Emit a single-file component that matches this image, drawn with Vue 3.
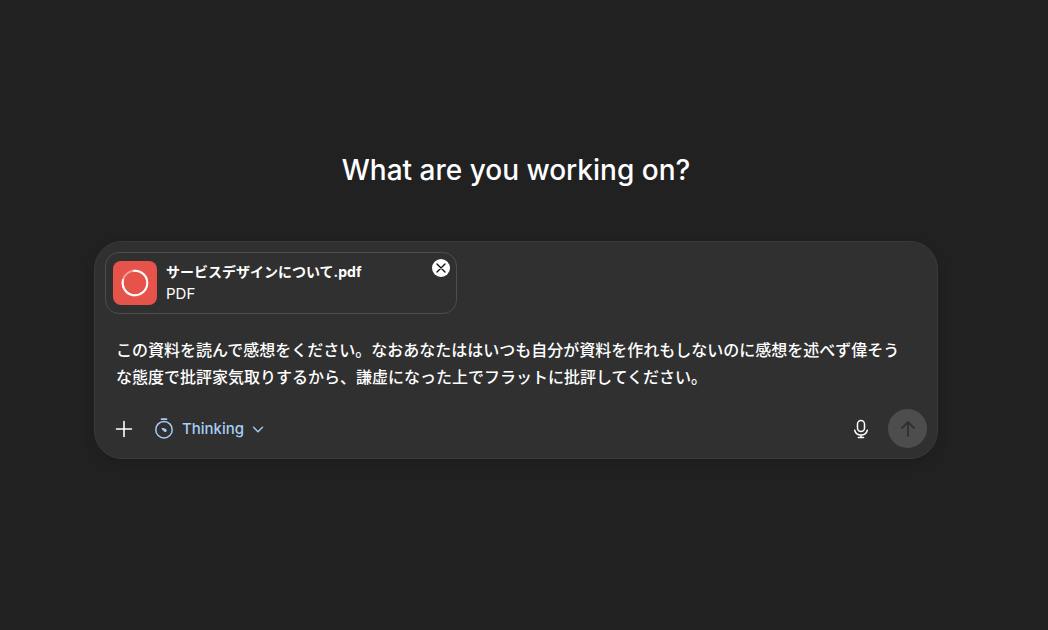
<script setup>
import { ref } from 'vue'

const fileName = 'サービスデザインについて.pdf'
const attached = ref(true)
const message = ref(
  'この資料を読んで感想をください。なおあなたははいつも自分が資料を作れもしないのに感想を述べず偉そうな態度で批評家気取りするから、謙虚になった上でフラットに批評してください。'
)
</script>

<template>
  <main class="page">
    <h1 class="title">What are you working on?</h1>

    <form class="composer" @submit.prevent>
      <div v-if="attached" class="file">
        <span class="file-icon">
          <svg width="28" height="28" viewBox="0 0 28 28" fill="none" stroke="#fff" stroke-width="2">
            <circle cx="14" cy="14" r="12.3" stroke-opacity="0.45" />
            <path d="M13 1.7A12.3 12.3 0 1 1 2 11" stroke-linecap="round" />
          </svg>
        </span>
        <div class="file-text">
          <div class="file-name">{{ fileName }}</div>
          <div class="file-type">PDF</div>
        </div>
        <button class="remove" type="button" aria-label="Remove file" @click="attached = false">
          <svg width="18" height="18" viewBox="0 0 18 18" fill="none" stroke="#111" stroke-width="1.4" stroke-linecap="round">
            <path d="M5 5l8 8M13 5l-8 8" />
          </svg>
        </button>
      </div>

      <textarea v-model="message" class="message" rows="2" aria-label="Message" spellcheck="false"></textarea>

      <div class="toolbar">
        <button class="tool" type="button" aria-label="Add">
          <svg width="18" height="18" viewBox="0 0 18 18" fill="none" stroke="currentColor" stroke-width="1.6" stroke-linecap="round">
            <path d="M9 1.5v15M1.5 9h15" />
          </svg>
        </button>
        <button class="thinking" type="button">
          <svg width="20" height="22" viewBox="0 0 20 22" fill="none" stroke="currentColor" stroke-width="1.5" stroke-linecap="round">
            <circle cx="10" cy="11.7" r="8.2" />
            <path d="M7.6 1.2h4.8" stroke-width="1.8" />
            <path d="M7.4 10c1.600 0 4 .5 4.900 1.400a1.500 1.500 0 0 1-1.900 2.300c-1-.6-2.300-2.200-3-3.700z" fill="currentColor" stroke="none" />
          </svg>
          <span>Thinking</span>
          <svg width="12" height="12" viewBox="0 0 12 12" fill="none" stroke="currentColor" stroke-width="1.4" stroke-linecap="round" stroke-linejoin="round">
            <path d="M1.500 4.200L6 8.700l4.500-4.500" />
          </svg>
        </button>
        <span class="spacer"></span>
        <button class="tool" type="button" aria-label="Dictate">
          <svg width="18" height="20" viewBox="0 0 18 20" fill="none" stroke="currentColor" stroke-width="1.5" stroke-linecap="round">
            <rect x="5.500" y="1.500" width="7" height="11" rx="3.500" />
            <path d="M2.700 11.200a6.500 6.500 0 0 0 12.600 0M9 16v2.500M6.400 18.500h5.200" />
          </svg>
        </button>
        <button class="send" type="submit" aria-label="Send" disabled>
          <svg width="18" height="18" viewBox="0 0 18 18" fill="none" stroke="currentColor" stroke-width="1.8" stroke-linecap="round" stroke-linejoin="round">
            <path d="M9 16V2M3 8l6-6 6 6" />
          </svg>
        </button>
      </div>
    </form>
  </main>
</template>

<style>
body {
  background: #212121;
}
</style>

<style scoped>
.page {
  box-sizing: border-box;
  padding: 152px 110px 40px 94px;
  color: #fff;
  font-family: Inter, "Noto Sans CJK JP", sans-serif;
}

.title {
  margin: 0 0 53px;
  font-size: 28px;
  line-height: 36px;
  font-weight: 500;
  text-align: center;
}

.composer {
  box-sizing: border-box;
  padding: 10px;
  border: 1px solid #393939;
  border-radius: 28px;
  background: #303030;
  box-shadow: 0 4px 12px rgba(0, 0, 0, 0.12);
}

button {
  display: flex;
  align-items: center;
  justify-content: center;
  padding: 0;
  border: 0;
  background: none;
  color: inherit;
  font: inherit;
}

.file {
  box-sizing: border-box;
  display: flex;
  align-items: flex-start;
  gap: 9px;
  width: 352px;
  max-width: 100%;
  padding: 6px 6px 8px 7px;
  border: 1px solid #4d4d4d;
  border-radius: 14px;
}

.file-icon {
  display: flex;
  align-items: center;
  justify-content: center;
  width: 44px;
  height: 44px;
  margin-top: 2px;
  border-radius: 8px;
  background: #e5534b;
}

.file-text {
  flex: 1;
  margin-top: 2px;
  line-height: 22px;
}

.file-name {
  font-size: 14px;
  font-weight: 700;
}

.file-type {
  font-size: 15px;
}

.remove {
  width: 18px;
  height: 18px;
  border-radius: 50%;
  background: #fff;
}

.message {
  display: block;
  box-sizing: border-box;
  width: 100%;
  margin: 22px 0 19px;
  padding: 0 14px 0 11px;
  border: 0;
  outline: 0;
  resize: none;
  overflow: hidden;
  background: none;
  color: inherit;
  font-family: "Noto Sans CJK JP", sans-serif;
  font-size: 16px;
  font-weight: 500;
  line-height: 27px;
}

.toolbar {
  display: flex;
  align-items: center;
}

.tool {
  width: 38px;
  height: 38px;
}

.thinking {
  gap: 8px;
  margin-left: 11px;
  color: #a5cdf6;
  font-size: 15px;
  font-weight: 500;
}

.spacer {
  flex: 1;
}

.send {
  width: 39px;
  height: 39px;
  margin-left: 8px;
  border-radius: 50%;
  background: #4d4d4d;
  color: #303030;
}
</style>
